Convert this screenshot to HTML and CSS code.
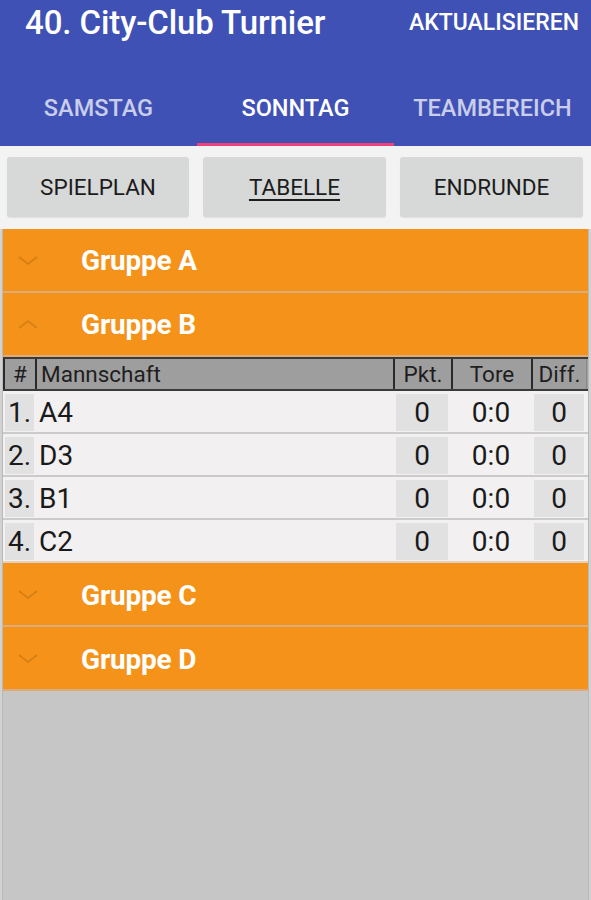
FILE: index.html
```html
<!DOCTYPE html>
<html lang="de">
<head>
<meta charset="utf-8">
<title>40. City-Club Turnier</title>
<link rel="stylesheet" href="styles.css">
</head>
<body>
<header class="appbar">
  <div class="toolbar">
    <h1 class="title">40. City-Club Turnier</h1>
    <span class="action">AKTUALISIEREN</span>
  </div>
  <nav class="tabs">
    <div class="tab">SAMSTAG</div>
    <div class="tab active">SONNTAG</div>
    <div class="tab">TEAMBEREICH</div>
  </nav>
</header>
<div class="buttons">
  <div class="btn">SPIELPLAN</div>
  <div class="btn current">TABELLE</div>
  <div class="btn">ENDRUNDE</div>
</div>
<main class="content">
  <div class="panel">
    <div class="group">
      <svg class="chev" width="20" height="10" viewBox="0 0 20 10"><path d="M1 1 L10 8 L19 1" fill="none" stroke="#d47f12" stroke-width="1.6"/></svg>
      <span class="gname">Gruppe A</span>
    </div>
    <div class="group">
      <svg class="chev" width="20" height="10" viewBox="0 0 20 10"><path d="M1 9 L10 2 L19 9" fill="none" stroke="#d47f12" stroke-width="1.6"/></svg>
      <span class="gname">Gruppe B</span>
    </div>
    <div class="table">
      <div class="thead">
        <div class="th c-rank">#</div>
        <div class="th c-name">Mannschaft</div>
        <div class="th c-pkt">Pkt.</div>
        <div class="th c-tore">Tore</div>
        <div class="th c-diff">Diff.</div>
      </div>
      <div class="row">
        <div class="cell box">1.</div><div class="cell name">A4</div><div class="cell box">0</div><div class="cell">0:0</div><div class="cell box">0</div>
      </div>
      <div class="row">
        <div class="cell box">2.</div><div class="cell name">D3</div><div class="cell box">0</div><div class="cell">0:0</div><div class="cell box">0</div>
      </div>
      <div class="row">
        <div class="cell box">3.</div><div class="cell name">B1</div><div class="cell box">0</div><div class="cell">0:0</div><div class="cell box">0</div>
      </div>
      <div class="row">
        <div class="cell box">4.</div><div class="cell name">C2</div><div class="cell box">0</div><div class="cell">0:0</div><div class="cell box">0</div>
      </div>
    </div>
    <div class="group lower">
      <svg class="chev" width="20" height="10" viewBox="0 0 20 10"><path d="M1 1 L10 8 L19 1" fill="none" stroke="#d47f12" stroke-width="1.6"/></svg>
      <span class="gname">Gruppe C</span>
    </div>
    <div class="group lower">
      <svg class="chev" width="20" height="10" viewBox="0 0 20 10"><path d="M1 1 L10 8 L19 1" fill="none" stroke="#d47f12" stroke-width="1.6"/></svg>
      <span class="gname">Gruppe D</span>
    </div>
  </div>
</main>
</body>
</html>
```
FILE: styles.css
```css
html, body {
  margin: 0;
  padding: 0;
  height: 100%;
}
body {
  width: 591px;
  height: 900px;
  font-family: Roboto, "Liberation Sans", sans-serif;
  background: #c6c6c6;
  display: flex;
  flex-direction: column;
  overflow: hidden;
}
.appbar {
  background: #3f51b5;
  color: #fff;
  height: 146px;
  display: flex;
  flex-direction: column;
}
.toolbar {
  height: 70px;
  display: flex;
  justify-content: space-between;
  align-items: flex-start;
  padding: 3px 12px 0 25px;
  box-sizing: border-box;
}
.title {
  margin: 0;
  font-size: 33px;
  font-weight: 500;
  line-height: 40px;
  letter-spacing: -0.1px;
}
.action {
  font-size: 23px;
  font-weight: 500;
  line-height: 40px;
}
.tabs {
  flex: 1;
  display: flex;
  align-items: stretch;
}
.tab {
  flex: 1;
  display: flex;
  align-items: center;
  justify-content: center;
  font-size: 23.5px;
  font-weight: 500;
  color: rgba(255,255,255,0.72);
  border-bottom: 3px solid transparent;
  padding-top: 2px;
}
.tab.active {
  color: #fff;
  border-bottom-color: #f0407a;
}
.buttons {
  background: #f3f3f3;
  display: grid;
  grid-template-columns: 182px 183px 183px;
  column-gap: 14px;
  padding: 11px 8px 12px 7px;
}
.btn {
  height: 60px;
  background: #d7d8d8;
  border-radius: 3px;
  display: flex;
  align-items: center;
  justify-content: center;
  font-size: 22.5px;
  color: #1c1c1c;
  box-shadow: 0 1px 1px rgba(0,0,0,0.08);
}
.btn.current {
  text-decoration: underline;
  text-underline-offset: 4px;
}
.content {
  flex: 1;
  background: #d2d2d2;
  padding: 0 2px;
  display: flex;
}
.panel {
  flex: 1;
  background: #c6c6c6;
  border-left: 1px solid #b9b9b9;
  border-right: 1px solid #b9b9b9;
}
.group {
  height: 61px;
  background: #f5921a;
  border-bottom: 2px solid #dcad7a;
  display: flex;
  align-items: center;
  padding-top: 1px;
  box-sizing: content-box;
}
.group + .group {
  height: 62px;
  padding-top: 0;
}
.group.lower {
  height: 60px;
  padding-top: 2px;
}
.chev {
  margin-left: 15px;
  width: 20px;
  height: 10px;
}
.gname {
  margin-left: 43px;
  color: #fff;
  font-size: 28px;
  font-weight: 700;
  letter-spacing: -0.2px;
}
.table {
  background: #f2f0f0;
}
.thead, .row {
  display: grid;
  grid-template-columns: 32px 358px 58px 80px 56px;
}
.thead {
  background: #9e9e9e;
  border-top: 2px solid #3a3a3a;
  border-bottom: 2px solid #3a3a3a;
  height: 30px;
}
.th {
  display: flex;
  align-items: center;
  justify-content: center;
  font-size: 22.5px;
  color: #1e1e1e;
  border-left: 2px solid #2a2a2a;
  box-sizing: border-box;
}
.th.c-name {
  justify-content: flex-start;
  padding-left: 4px;
}
.th.c-diff {
  border-right: 1px solid #8a8a8a;
}
.row {
  height: 37px;
  padding: 3px 0 1px;
  border-bottom: 2px solid #cbcbcb;
  align-items: stretch;
}
.row:last-child {
  border-bottom-color: #e2d2bd;
}
.cell {
  display: flex;
  align-items: center;
  justify-content: center;
  font-size: 28px;
  color: #1a1a1a;
}
.cell.box {
  background: #e1e1e1;
  margin: 0 3px;
}
.row .cell:first-child {
  margin: 0 1px 0 2px;
}
.cell.name {
  justify-content: flex-start;
  padding-left: 4px;
}
```
